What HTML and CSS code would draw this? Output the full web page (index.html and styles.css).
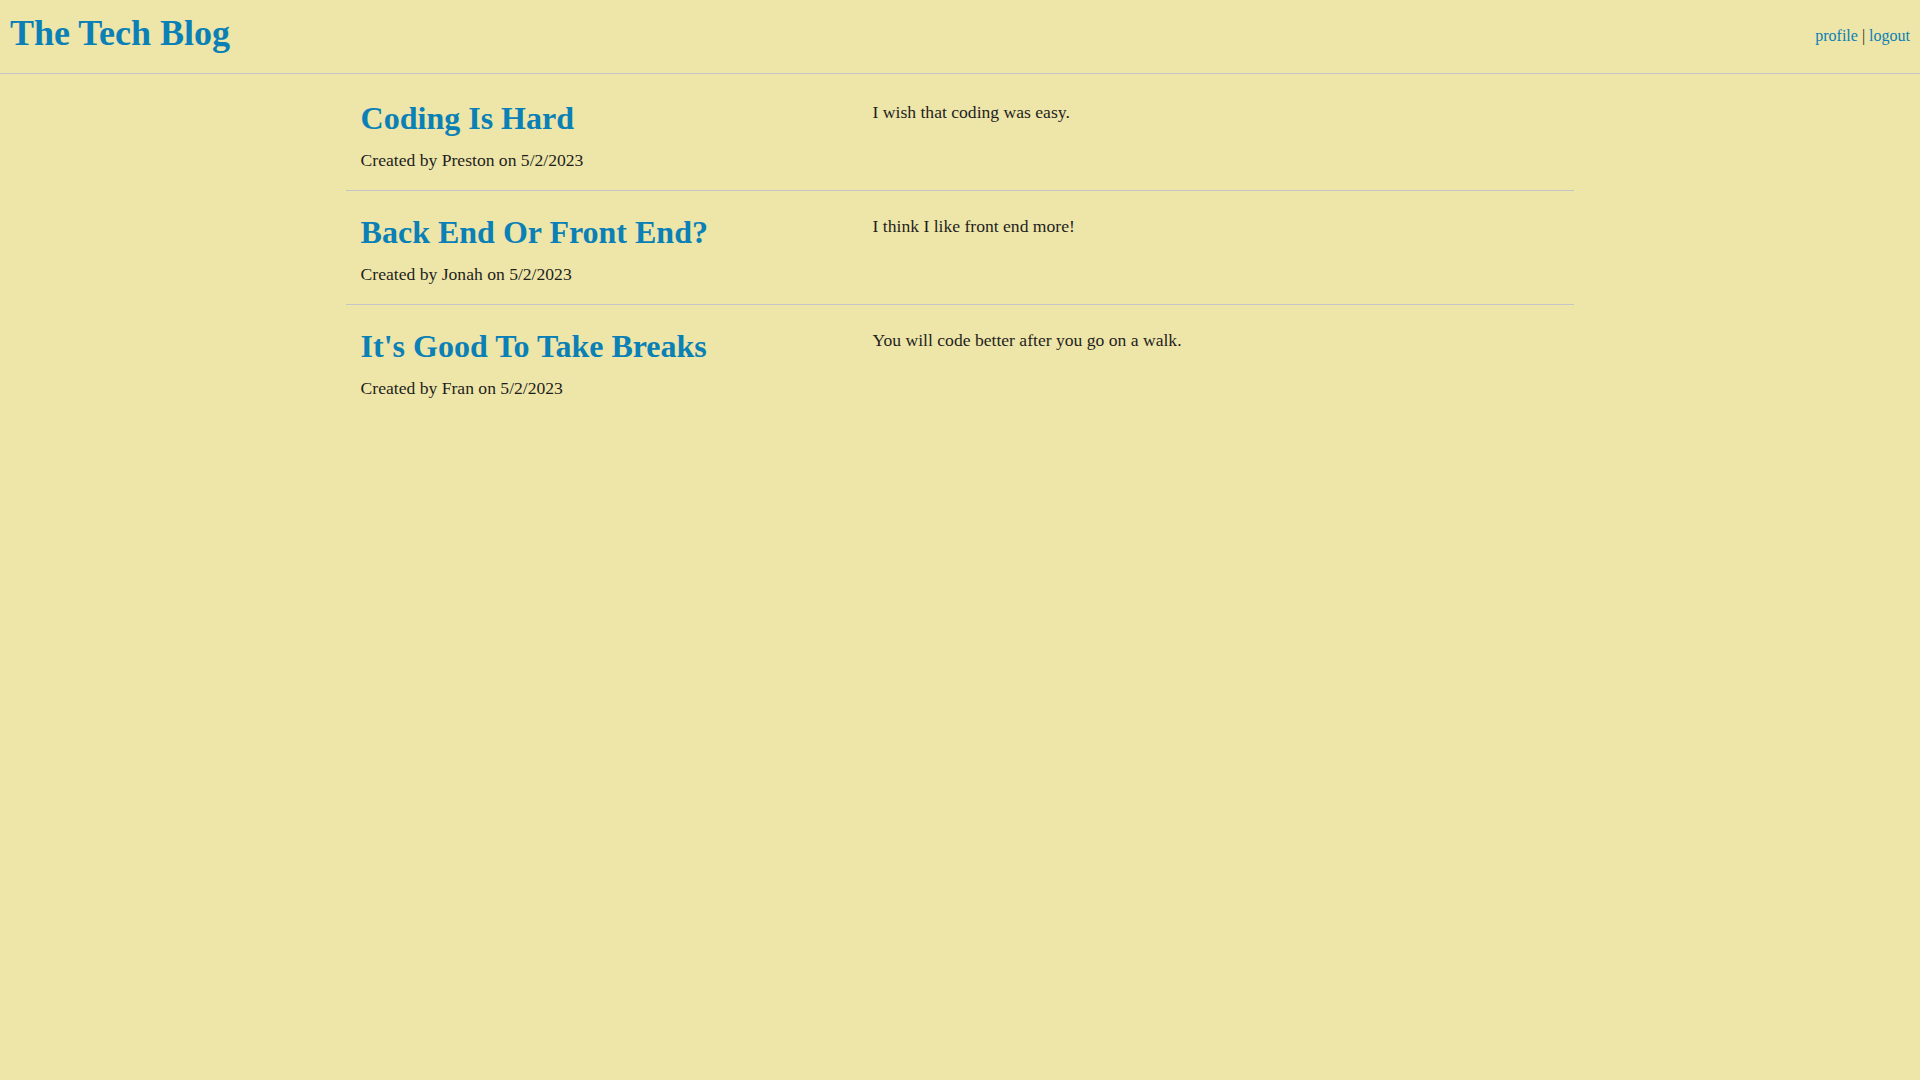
FILE: index.html
```html
<!DOCTYPE html>
<html lang="en">
<head>
<meta charset="utf-8">
<title>The Tech Blog</title>
<link rel="stylesheet" href="styles.css">
</head>
<body>
<header class="site-header">
  <h1 class="brand"><a href="#">The Tech Blog</a></h1>
  <nav class="nav"><a href="#">profile</a> | <a href="#">logout</a></nav>
</header>
<main class="posts">
  <article class="post">
    <div class="post-head">
      <h2 class="post-title"><a href="#">Coding Is Hard</a></h2>
      <p class="post-meta">Created by Preston on 5/2/2023</p>
    </div>
    <div class="post-body"><p>I wish that coding was easy.</p></div>
  </article>
  <article class="post">
    <div class="post-head">
      <h2 class="post-title"><a href="#">Back End Or Front End?</a></h2>
      <p class="post-meta">Created by Jonah on 5/2/2023</p>
    </div>
    <div class="post-body"><p>I think I like front end more!</p></div>
  </article>
  <article class="post">
    <div class="post-head">
      <h2 class="post-title"><a href="#">It's Good To Take Breaks</a></h2>
      <p class="post-meta">Created by Fran on 5/2/2023</p>
    </div>
    <div class="post-body"><p>You will code better after you go on a walk.</p></div>
  </article>
</main>
</body>
</html>
```
FILE: styles.css
```css
html, body {
  margin: 0;
  padding: 0;
  background: #eee6a8;
  color: #1e1e1e;
  font-family: "Liberation Serif", "Times New Roman", serif;
  min-height: 100%;
}
a {
  color: #0a80b6;
  text-decoration: none;
}
.site-header {
  display: flex;
  justify-content: space-between;
  align-items: flex-start;
  height: 74px;
  box-sizing: border-box;
  padding: 0 10px;
  border-bottom: 1px solid #c5c5c9;
}
.brand {
  margin: 12px 0 0;
  font-size: 36px;
  font-weight: bold;
  line-height: normal;
}
.nav {
  margin-top: 27px;
  font-size: 16px;
  line-height: normal;
}
.posts {
  width: 64%;
  margin: 0 auto;
  padding-top: 3px;
}
.post {
  display: flex;
  padding: 23px 0 19px;
  border-bottom: 1px solid #c5c5c9;
}
.post:last-child {
  border-bottom: none;
}
.post-head {
  width: 41.6667%;
  box-sizing: border-box;
  padding: 0 15px;
}
.post-body {
  width: 58.3333%;
  box-sizing: border-box;
  padding: 2px 15px 0;
}
.post-title {
  margin: 0 0 13px;
  font-size: 32px;
  font-weight: bold;
  line-height: normal;
}
.post-meta,
.post-body p {
  margin: 0;
  font-size: 17.6px;
  line-height: normal;
}
```
